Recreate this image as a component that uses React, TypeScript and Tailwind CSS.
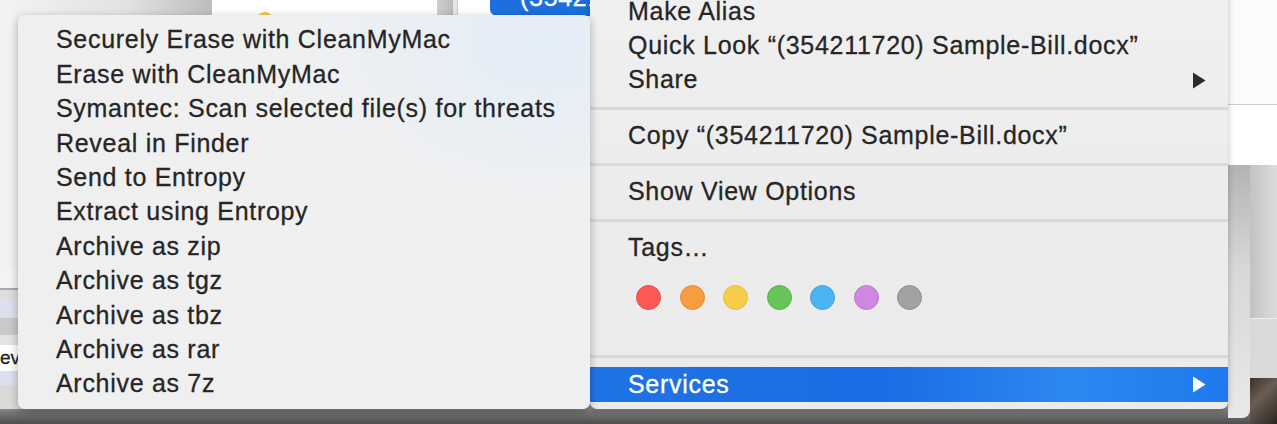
import React from "react";

const servicesItems = [
  "Securely Erase with CleanMyMac",
  "Erase with CleanMyMac",
  "Symantec: Scan selected file(s) for threats",
  "Reveal in Finder",
  "Send to Entropy",
  "Extract using Entropy",
  "Archive as zip",
  "Archive as tgz",
  "Archive as tbz",
  "Archive as rar",
  "Archive as 7z",
];

const tagColors = [
  { fill: "bg-[#fd5a57]", ring: "border-[#ea4a48]" },
  { fill: "bg-[#f89c40]", ring: "border-[#e98b33]" },
  { fill: "bg-[#f5cd4a]", ring: "border-[#e6bd3c]" },
  { fill: "bg-[#65c556]", ring: "border-[#55b348]" },
  { fill: "bg-[#4ab5f2]", ring: "border-[#3aa3e2]" },
  { fill: "bg-[#cf88e2]", ring: "border-[#be77d2]" },
  { fill: "bg-[#a2a2a4]", ring: "border-[#919193]" },
];

const Arrow = ({ white }: { white?: boolean }) => (
  <svg width="14" height="17" viewBox="0 0 14 17" className="mr-[22px]">
    <path d="M1 0.5 L13.5 8.5 L1 16.5 Z" fill={white ? "#ffffff" : "#2b2b2b"} />
  </svg>
);

const Separator = () => (
  <div className="h-[22px] flex items-center">
    <div className="h-[3px] w-full bg-[#d9d9db]" />
  </div>
);

const Row = ({ children }: { children: React.ReactNode }) => (
  <div className="h-[34px] flex items-center justify-between pl-[38px] whitespace-nowrap">
    {children}
  </div>
);

const App = () => {
  return (
    <div
      className="relative w-[1277px] h-[424px] overflow-hidden bg-[linear-gradient(to_bottom,#c8c8c8_0%,#c8c8c8_94%,#7a7a7a_97%,#4e4e4e_100%)] text-[25px] tracking-[0.7px] text-[#262626] [-webkit-text-stroke:0.3px_currentColor]"
      style={{ fontFamily: '"Liberation Sans", Arial, sans-serif' }}
    >
      {/* finder window behind, top left */}
      <div className="absolute left-0 top-0 w-[212px] h-[290px] bg-[linear-gradient(to_right,#f3f3f3,#e2e2e2_60%,#bdbdbd)]" />
      <div className="absolute left-[212px] top-0 w-[225px] h-[60px] bg-white">
        <div className="absolute left-[45px] top-[12px] w-[16px] h-[16px] rounded-full bg-[#f2c84a]" />
      </div>
      <div className="absolute left-[437px] top-0 w-[16px] h-[60px] bg-[linear-gradient(to_right,#d0d0d0,#b9b9b9)]" />
      <div className="absolute left-[453px] top-0 w-[5px] h-[60px] bg-[#e6e6e6] border-r border-[#c9c9c9]" />
      <div className="absolute left-[458px] top-0 w-[132px] h-[60px] bg-white overflow-hidden">
        <div className="absolute left-[32px] top-[-14px] w-[100px] h-[30px] rounded-bl-[7px] bg-[#1c6fdc] text-white pl-[30px] leading-[22px] overflow-hidden whitespace-nowrap">
          (35421
        </div>
      </div>

      {/* finder window behind, bottom left */}
      <div className="absolute left-0 top-[270px] w-[40px] h-[139px] flex flex-col">
        <div className="h-[18px] bg-[#f4f4f4]" />
        <div className="h-[2px] bg-[#a9a9a9]" />
        <div className="h-[10px] bg-[#dedede]" />
        <div className="h-[18px] bg-[#dcdfee]" />
        <div className="h-[17px] bg-[#c9c9cb]" />
        <div className="h-[10px] bg-[#e3e3e5]" />
        <div className="h-[26px] bg-white text-[19px] leading-[26px] tracking-normal text-[#222] overflow-hidden whitespace-nowrap">ev</div>
        <div className="h-[14px] bg-[#dcdfee]" />
        <div className="flex-1 bg-[#dadada]" />
      </div>

      {/* window behind, right side */}
      <div className="absolute left-[1228px] top-0 w-[49px] h-[424px] flex flex-col">
        <div className="h-[105px] bg-[#fbfbfb] border-b border-[#cfcfcf]" />
        <div className="h-[60px] bg-white" />
        <div className="flex flex-1">
          <div className="w-[22px] h-[253px] rounded-br-[8px] bg-[linear-gradient(to_bottom,#b3b3b3,#d7d7d7_40%,#e9e9e9)]" />
          <div className="flex-1 flex flex-col">
            <div className="h-[153px] bg-[linear-gradient(to_right,#c2c2c2,#dcdcdc)]" />
            <div className="h-[60px] bg-[#d9d9d9] border-t border-[#efefef]" />
            <div className="flex-1 bg-[linear-gradient(135deg,#3a302a,#6b5d52_40%,#2c2622)]" />
          </div>
        </div>
      </div>

      {/* main context menu */}
      <div className="absolute left-[590px] top-[-13px] w-[638px] h-[422px] rounded-b-[7px] pt-[8px] bg-[linear-gradient(to_bottom,#f0f0f0,#ececed_50%,#ebebec)] shadow-[0_2px_6px_rgba(0,0,0,0.25)]">
        <Row>Make Alias</Row>
        <Row>Quick Look “(354211720) Sample-Bill.docx”</Row>
        <Row>
          <span>Share</span>
          <Arrow />
        </Row>
        <Separator />
        <Row>Copy “(354211720) Sample-Bill.docx”</Row>
        <Separator />
        <Row>Show View Options</Row>
        <Separator />
        <Row>Tags…</Row>
        <div className="h-[80px] pt-[20px] pl-[46px] flex gap-[18.5px]">
          {tagColors.map((c, i) => (
            <div
              key={i}
              className={`w-[25px] h-[25px] rounded-full border ${c.fill} ${c.ring}`}
            />
          ))}
        </div>
        <Separator />
        <div className="h-[35px] flex items-center justify-between pl-[38px] text-white bg-[linear-gradient(to_right,#1f74e4,#1a6ce4_45%,#2c88f2_75%,#1f79ec)]">
          <span>Services</span>
          <Arrow white />
        </div>
      </div>

      {/* services submenu */}
      <div className="absolute left-[18px] top-[15px] w-[572px] h-[394px] rounded-[7px] pt-[8px] pl-[38px] bg-[radial-gradient(ellipse_at_92%_6%,#e3edf8_0%,#eff0f1_30%,#efefef_100%)] shadow-[0_3px_10px_rgba(0,0,0,0.3)]">
        {servicesItems.map((item) => (
          <div key={item} className="h-[34.4px] flex items-center whitespace-nowrap">
            {item}
          </div>
        ))}
      </div>
    </div>
  );
};

export default App;
